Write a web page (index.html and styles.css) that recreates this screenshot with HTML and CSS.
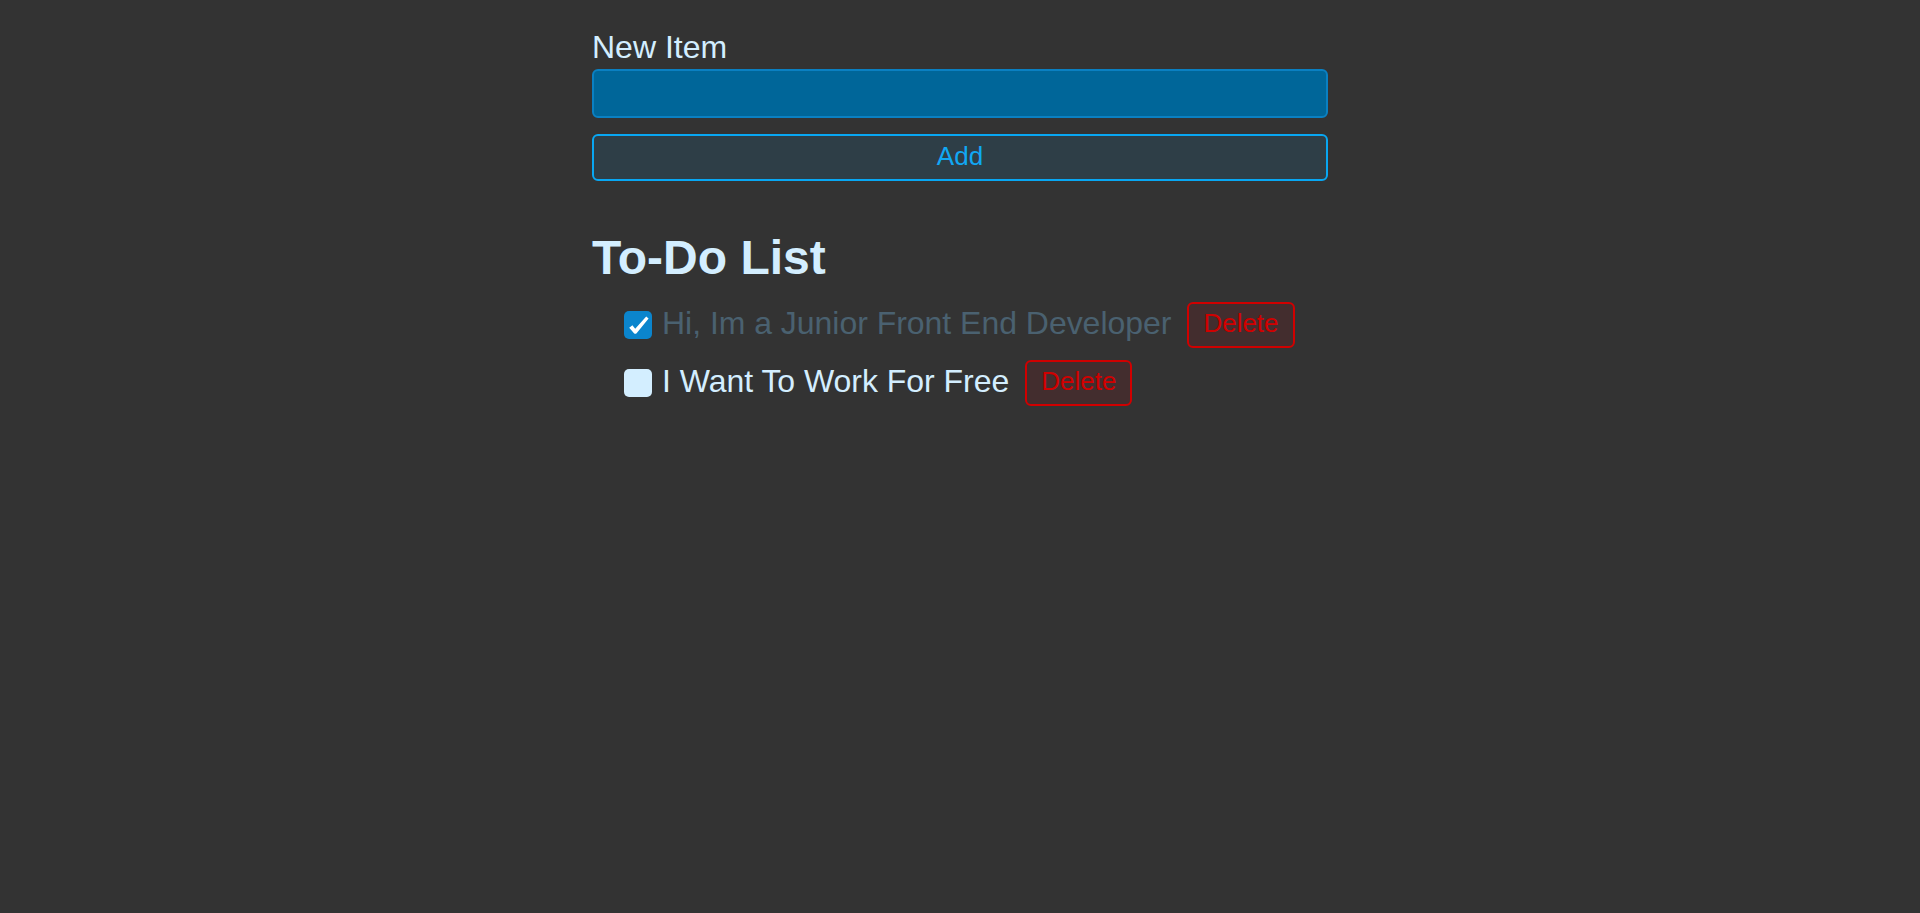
FILE: index.html
```html
<!DOCTYPE html>
<html lang="en">
<head>
<meta charset="utf-8">
<title>To-Do List</title>
<link rel="stylesheet" href="styles.css">
</head>
<body>
<main class="app">
  <form class="new-form">
    <label class="new-label" for="new-item">New Item</label>
    <input class="new-input" id="new-item" type="text">
    <button class="add-btn" type="button">Add</button>
  </form>
  <h2 class="list-title">To-Do List</h2>
  <ul class="todo-list">
    <li class="todo-item done">
      <span class="check checked">
        <svg viewBox="0 0 28 28" width="28" height="28"><path d="M5.2 16.8 L8.4 14.2 L11.2 17.8 L22.2 5.6 L24.6 7.4 L12.6 22.2 Q11.2 23.4 10 22.2 Z" fill="#ffffff"/></svg>
      </span>
      <span class="todo-text">Hi, Im a Junior Front End Developer</span>
      <button class="del-btn" type="button">Delete</button>
    </li>
    <li class="todo-item">
      <span class="check"></span>
      <span class="todo-text">I Want To Work For Free</span>
      <button class="del-btn" type="button">Delete</button>
    </li>
  </ul>
</main>
</body>
</html>
```

FILE: styles.css
```css
* { box-sizing: border-box; }

html, body {
  margin: 0;
  padding: 0;
  background: #333333;
  height: 100%;
}

body {
  font-family: Arial, "Liberation Sans", sans-serif;
  color: #d3eeff;
}

.app {
  width: 736px;
  margin: 0 auto;
  padding-top: 29px;
}

.new-form {
  display: flex;
  flex-direction: column;
}

.new-label {
  font-size: 32px;
  line-height: 36px;
  color: #d3eeff;
}

.new-input {
  margin-top: 4px;
  height: 49px;
  width: 100%;
  border: 2px solid #0a80c2;
  border-radius: 6px;
  background: #006699;
  color: #ffffff;
  font-size: 26px;
  font-family: inherit;
  padding: 0 10px;
  outline: none;
}

.add-btn {
  margin-top: 16px;
  height: 47px;
  width: 100%;
  border: 2px solid #08a7f3;
  border-radius: 6px;
  background: #2e3e47;
  color: #11a8f4;
  font-family: inherit;
  font-size: 26px;
  padding: 0 0 3px;
}

.list-title {
  margin: 49px 0 0;
  font-size: 48px;
  line-height: 55px;
  font-weight: bold;
  color: #d3eeff;
}

.todo-list {
  list-style: none;
  margin: 17px 0 0;
  padding: 0 0 0 32px;
  display: flex;
  flex-direction: column;
  gap: 12px;
}

.todo-item {
  display: flex;
  align-items: center;
  height: 46px;
}

.check {
  width: 28px;
  height: 28px;
  border-radius: 5px;
  background: #d3eeff;
  flex: none;
  display: flex;
}

.check.checked {
  background: #0b85cd;
}

.todo-text {
  margin-left: 10px;
  font-size: 32px;
  line-height: 37px;
  margin-bottom: 4px;
  letter-spacing: -0.03px;
  color: #d3eeff;
}

.todo-item.done .todo-text {
  color: #4a6170;
}

.del-btn {
  margin-left: 16px;
  height: 46px;
  padding: 0 14px 3px;
  border: 2px solid #d10000;
  border-radius: 6px;
  background: #432d2e;
  color: #d10000;
  font-family: inherit;
  font-size: 26px;
}
```
